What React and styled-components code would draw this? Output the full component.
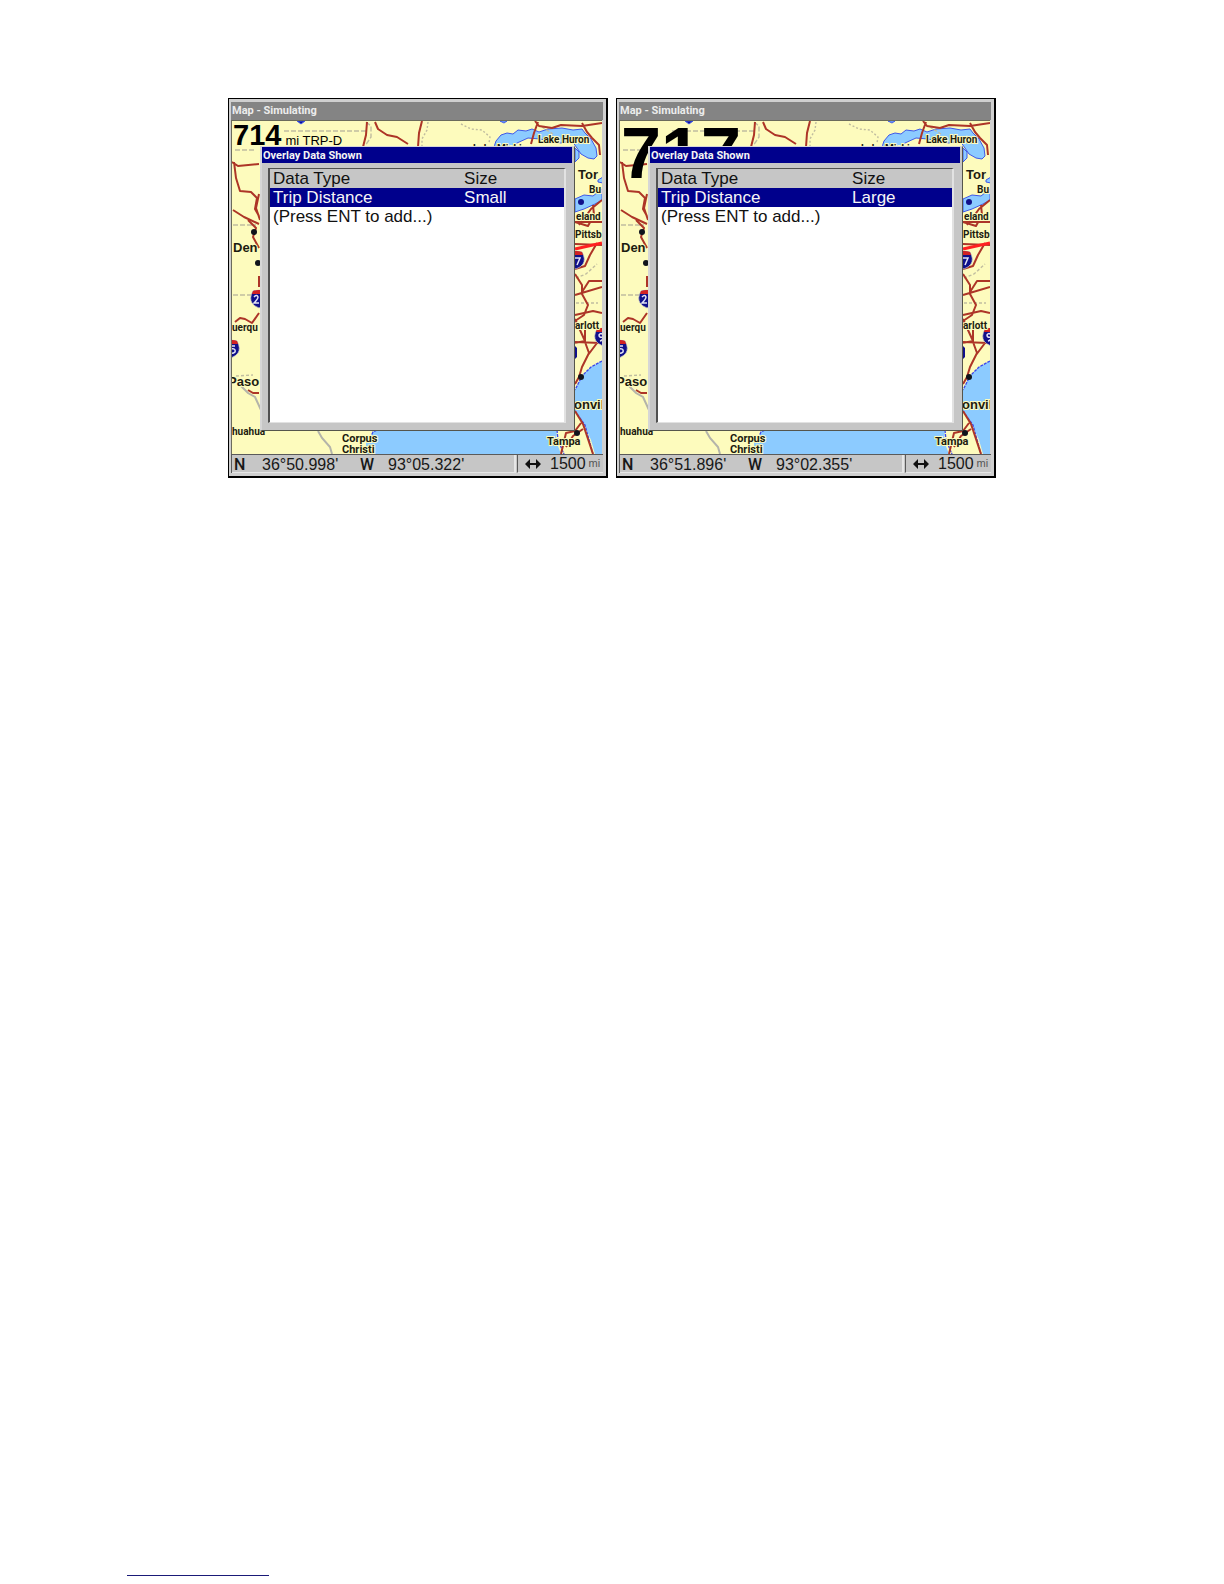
import React from 'react';
import styled, { createGlobalStyle } from 'styled-components';

const GlobalStyle = createGlobalStyle`
  * {
    box-sizing: border-box;
  }

  body {
    margin: 0;
    background: #ffffff;
    font-family: 'Liberation Sans', Arial, sans-serif;
  }
`;

const Page = styled.main`
  display: flex;
  flex-direction: column;
  min-height: 100vh;
  padding: 98px 64px 8px;
`;

const Figure = styled.section`
  display: grid;
  grid-template-columns: repeat(2, minmax(0, 380px));
  gap: 8px;
  justify-content: center;
`;

const FooterRule = styled.hr`
  width: 142px;
  height: 1px;
  margin: auto 0 0 63px;
  border: none;
  background: #1a1a78;
`;

const Device = styled.article`
  display: flex;
  flex-direction: column;
  padding: 3px 3px 3px 2px;
  border: solid #000000;
  border-width: 1px 2px 2px 1px;
  background: #cfcfcf;
`;

const DeviceTitle = styled.h2`
  height: 18px;
  margin: 0;
  padding-left: 1px;
  background: #848484;
  color: #ececec;
  font: bold 11px/18px Roboto, 'Liberation Sans', sans-serif;
`;

const MapPane = styled.div`
  position: relative;
  height: 334px;
  border: solid #6b6b5c;
  border-width: 1px 0 0 1px;
  margin-right: 1px;
  overflow: hidden;
  background: #fdfbbd;
`;

const MapDrawing = styled.svg`
  display: block;
  width: 100%;
  height: 333px;

  text {
    font-family: Roboto, 'Liberation Sans', sans-serif;
    font-size: 10px;
    font-weight: bold;
    fill: #1c1c10;
    stroke: #fdfbbd;
    stroke-width: 2px;
    paint-order: stroke;
  }

  .city {
    font-family: 'Liberation Sans', sans-serif;
    font-size: 13px;
  }

  .coast {
    font-size: 11px;
  }
`;

const Overlay = styled.div`
  position: absolute;
  top: 0;
  left: 0;
  display: flex;
  align-items: baseline;
  gap: 4px;
  padding-left: 1px;
  color: #000000;
  font-size: 13px;
  line-height: 1;
`;

const OverlayValue = styled.span`
  font-weight: bold;
  font-size: ${({ $large }) => ($large ? '72px' : '29px')};
  line-height: ${({ $large }) => ($large ? '64px' : '28px')};
`;

const Dialog = styled.div`
  position: absolute;
  inset: 25px 27px 23px 28px;
  display: flex;
  flex-direction: column;
  border: solid #d6d6d6;
  border-width: 1px 0 0 2px;
  border-right: 1px solid #55554c;
  border-bottom: 1px solid #55554c;
  background: #c6c6c6;
`;

const DialogTitle = styled.h3`
  height: 16px;
  margin: 0 2px 0 0;
  padding-left: 1px;
  background: #00008c;
  color: #f4f4f4;
  font: bold 11px/17px Roboto, 'Liberation Sans', sans-serif;
`;

const ListFrame = styled.div`
  flex: 1;
  margin: 5px 8px 7px 6px;
  border: solid #505050;
  border-width: 1px 2px 1px 2px;
  border-right-color: #e2e2e2;
  border-bottom-color: #e2e2e2;
  background: #ffffff;
`;

const DataTable = styled.table`
  width: 100%;
  table-layout: fixed;
  border-collapse: collapse;
  font-size: 17px;
  line-height: 19px;
  color: #111111;
`;

const Cell = styled.td`
  height: 19px;
  padding: 0 0 0 3px;
  text-align: left;
  font-weight: normal;
  white-space: nowrap;
`;

const TypeHeading = styled(Cell)`
  width: 65%;
`;

const HeaderRow = styled.tr`
  background: #c6c6c6;
`;

const DataRow = styled.tr`
  background: ${({ $selected }) => ($selected ? '#00008c' : '#ffffff')};
  color: ${({ $selected }) => ($selected ? '#f6f6f6' : '#111111')};
`;

const StatusBar = styled.footer`
  display: flex;
  height: 19px;
  border: solid #5a5a5a;
  border-width: 1px 0 0 1px;
  background: #c6c6c6;
  color: #181818;
  font-size: 16px;
  line-height: 19px;
`;

const Position = styled.div`
  display: grid;
  grid-template-columns: 28px 98px 28px auto;
  flex: 1;
  padding-left: 2px;
  border-right: 2px solid #e6e6e6;
  border-bottom: 1px solid #e6e6e6;
`;

const Hemisphere = styled.span`
  font-family: Roboto, 'Liberation Sans', sans-serif;
  font-weight: 500;
`;

const Range = styled.div`
  display: flex;
  align-items: center;
  width: 86px;
  margin-left: 1px;
  padding-left: 7px;
  border-left: 1px solid #5a5a5a;
  border-bottom: 1px solid #e6e6e6;
`;

const RangeArrow = styled.svg`
  width: 16px;
  height: 10px;
  margin-right: 9px;
`;

const Unit = styled.small`
  margin-left: 3px;
  color: #555555;
  font-size: 11px;
`;

const Shield = ({ x, y, digit }) => (
  <g transform={`translate(${x} ${y})`}>
    <path
      d="M-6-8Q0-10 6-8Q10-1 7 4Q5 7 0 9Q-5 7-7 4Q-10-1-6-8Z"
      fill="#10108a"
      stroke="#c8c8c8"
      strokeWidth="0.7"
    />
    <path d="M-6-8Q0-10 6-8L7-5H-7Z" fill="#d22222" />
    <path d={digit} fill="none" stroke="#e4e4f6" strokeWidth="1.5" />
  </g>
);

const TWO = 'M-5-2Q-2-5-1-2Q-1 0-5 4H0';
const SEVEN = 'M-1-2H4L1 5';
const NINE = 'M0 0Q-4 1-4-2Q-2-5 0-2Q1 3-3 4';
const FIVE = 'M4-3H0V0Q5-1 4 3Q2 5-1 4';

const RegionMap = () => (
  <MapDrawing viewBox="0 0 370 333" preserveAspectRatio="none" aria-label="Map">
    <rect width="370" height="333" fill="#fdfbbd" />

    {/* Great Lakes */}
    <g fill="#8ccbff" stroke="#3f58e8" strokeWidth="1">
      <path d="M262 26L264 20L269 14L275 12L281 13L286 9L294 10L300 8L307 11L316 8L330 7L341 9L350 8L353 12L359 18L364 27L365 35L362 38L356 37L349 33L345 27L340 20L329 22L308 18L296 17L285 22L279 27Z" />
      <path d="M343 27L347 31L347 37L343 41Z" />
      <path d="M343 78L352 74L361 75L370 68V79L363 83L352 88L343 91Z" />
      <path d="M366 59L371 56V62L366 61Z" />
      <path d="M268 0L275 0L272 2Z" />
      <path d="M65 0L73 0L69 3Z" fill="#10109a" />
    </g>

    {/* Gulf and Atlantic */}
    <path d="M134 333L134 322L139 315L142 309H325L324 320L329 333Z" fill="#8ccbff" />
    <path d="M370 240L359 246L350 255L343 269V290L352 303L359 319L363 333H370Z" fill="#8ccbff" />
    <path d="M370 240L359 246L350 255L343 269M343 290L353 304L361 333M138 317L141 311L145 309M325 309L326 319L332 333" fill="none" stroke="#3b45ec" strokeWidth="1.3" strokeDasharray="3 1" />

    {/* State and national borders */}
    <g fill="none" stroke="#c0bda0" strokeWidth="1.4">
      <path d="M52 10H134M3 29H24M1 104H24M1 174H26M134 1L139 5L139 16L133 25" strokeDasharray="5 2" />
      <path d="M196 1L195 9L190 18L190 27M229 3L239 8L250 9L258 16L257 22" strokeDasharray="2 2" />
      <path d="M9 265L16 272L23 276L29 289M86 310L90 317L98 326L100 333" stroke="#b4b4aa" strokeWidth="2" />
      <path d="M4 255L21 254M344 182H366M344 157L354 153L365 143M310 6L321 13L318 20" strokeDasharray="3 2" />
    </g>

    {/* Highways */}
    <g fill="none" stroke="#ad3527" strokeWidth="2" strokeLinejoin="round">
      <path d="M135 1L134 14L131 26M143 1L146 8L155 14L165 16L176 23M190 0L187 12L186 26" />
      <path d="M303 0L307 5L320 7L329 4L350 5L370 2M306 1L302 12L299 23M350 2L355 11L360 17L367 24L368 34" />
      <path d="M0 41L6 45L27 43M2 41L4 57L8 70L19 71L25 77L23 88L27 95M1 89L12 96L27 103M27 73L24 87L28 99" />
      <path d="M16 99L24 107L21 116L27 127M27 155V166M3 201L8 197L13 198L20 202L27 192M16 269L21 272L27 272" />
      <path d="M370 79L359 88L354 95L347 104M361 84L362 94L356 105L343 101M343 123L370 124M343 101H370" />
      <path d="M365 122L358 134L353 145L343 148M343 153L350 164L350 173L356 184L352 194L343 200M350 171L357 160L370 160M343 174L370 166M343 194L361 190L370 192" />
      <path d="M343 198L353 220L343 222M353 209V221M343 221L368 222M353 221L357 232L350 246L347 256L343 263M368 218L356 234" />
      <path d="M343 290L351 303L356 318L361 333M349 302L343 310L334 312L329 333M351 308L341 315L334 326" />
    </g>
    <path d="M343 128L370 122" stroke="#ff2020" strokeWidth="3" />

    <Shield x={27} y={178} digit={TWO} />
    <Shield x={-1} y={228} digit={FIVE} />
    <Shield x={344} y={139} digit={SEVEN} />
    <Shield x={371} y={216} digit={NINE} />
    <path d="M341 223L345 227V236L341 240Z" fill="#10108a" />

    <g fill="#10141c">
      <circle cx="22" cy="111" r="3" />
      <circle cx="26" cy="142" r="3" />
      <circle cx="349" cy="256" r="3" />
      <circle cx="345" cy="312" r="3" />
      <circle cx="349" cy="81" r="3" fill="#10108a" />
    </g>

    <text x="241" y="31">Lake Michigan</text>
    <text x="306" y="22">Lake Huron</text>
    <text x="346" y="58" className="city">Tor</text>
    <text x="357" y="72">Bu</text>
    <text x="344" y="99">eland</text>
    <text x="343" y="117">Pittsb</text>
    <text x="1" y="131" className="city">Den</text>
    <text x="0" y="210">uerqu</text>
    <text x="-4" y="265" className="city">Paso</text>
    <text x="0" y="314">huahua</text>
    <text x="343" y="208">arlott</text>
    <text x="342" y="288" className="city">onvil</text>
    <text x="110" y="321" className="coast">Corpus</text>
    <text x="110" y="332" className="coast">Christi</text>
    <text x="315" y="324" className="coast">Tampa</text>
  </MapDrawing>
);

const Screen = ({ distance, unit, size, latitude, longitude, large }) => (
  <Device>
    <DeviceTitle>Map - Simulating</DeviceTitle>
    <MapPane>
      <RegionMap />
      <Overlay>
        <OverlayValue $large={large}>{distance}</OverlayValue>
        {unit && <span>{unit}</span>}
      </Overlay>
      <Dialog role="dialog" aria-label="Overlay Data Shown">
        <DialogTitle>Overlay Data Shown</DialogTitle>
        <ListFrame>
          <DataTable>
            <thead>
              <HeaderRow>
                <TypeHeading as="th">Data Type</TypeHeading>
                <Cell as="th">Size</Cell>
              </HeaderRow>
            </thead>
            <tbody>
              <DataRow $selected>
                <Cell>Trip Distance</Cell>
                <Cell>{size}</Cell>
              </DataRow>
              <DataRow>
                <Cell colSpan={2}>(Press ENT to add...)</Cell>
              </DataRow>
            </tbody>
          </DataTable>
        </ListFrame>
      </Dialog>
    </MapPane>
    <StatusBar>
      <Position>
        <Hemisphere>N</Hemisphere>
        <span>{latitude}</span>
        <Hemisphere>W</Hemisphere>
        <span>{longitude}</span>
      </Position>
      <Range>
        <RangeArrow viewBox="0 0 16 10" aria-hidden="true">
          <path d="M0 5L5 0V4H11V0L16 5L11 10V6H5V10Z" fill="#101010" />
        </RangeArrow>
        1500<Unit>mi</Unit>
      </Range>
    </StatusBar>
  </Device>
);

const App = () => (
  <>
    <GlobalStyle />
    <Page>
      <Figure>
        <Screen
          distance="714"
          unit="mi TRP-D"
          size="Small"
          latitude="36°50.998'"
          longitude="93°05.322'"
        />
        <Screen
          distance="717"
          size="Large"
          latitude="36°51.896'"
          longitude="93°02.355'"
          large
        />
      </Figure>
      <FooterRule />
    </Page>
  </>
);

export default App;
